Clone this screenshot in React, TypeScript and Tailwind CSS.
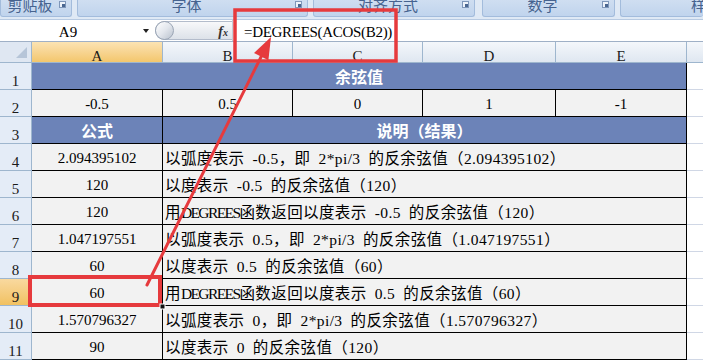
import React from "react";

type Row = { n: number; a: string; desc: React.ReactNode };

const rows: Row[] = [
	{ n: 4, a: "2.094395102", desc: "以弧度表示 -0.5，即 2*pi/3 的反余弦值（2.094395102）" },
	{ n: 5, a: "120", desc: "以度表示 -0.5 的反余弦值（120）" },
	{
		n: 6,
		a: "120",
		desc: (
			<>
				用<span className="tracking-[-1.6px]">DEGREES</span>函数返回以度表示 -0.5 的反余弦值（120）
			</>
		),
	},
	{ n: 7, a: "1.047197551", desc: "以弧度表示 0.5，即 2*pi/3 的反余弦值（1.047197551）" },
	{ n: 8, a: "60", desc: "以度表示 0.5 的反余弦值（60）" },
	{
		n: 9,
		a: "60",
		desc: (
			<>
				用<span className="tracking-[-1.6px]">DEGREES</span>函数返回以度表示 0.5 的反余弦值（60）
			</>
		),
	},
	{ n: 10, a: "1.570796327", desc: "以弧度表示 0，即 2*pi/3 的反余弦值（1.570796327）" },
	{ n: 11, a: "90", desc: "以度表示 0 的反余弦值（120）" },
];

const RibbonGroup = ({ label, className, launcher = true }: { label: string; className: string; launcher?: boolean }) => (
	<div
		className={`relative h-[17px] overflow-hidden rounded-b-[3px] border border-t-0 border-[#a3bcdc] bg-gradient-to-b from-[#cfdef1] to-[#c0d4ed] text-[15px] leading-none text-[#46638f] flex items-end pb-[4px] ${className}`}
	>
		<span>{label}</span>
		{launcher && (
			<span className="absolute right-[5px] top-[1px] w-[7px] h-[7px] border border-[#7f97ba] bg-[#eef3fa]">
				<span className="absolute right-0 bottom-0 w-[3px] h-[3px] bg-[#4a6690]" />
			</span>
		)}
	</div>
);

const RowHead = ({ n, active = false }: { n: number; active?: boolean }) => (
	<div
		className={`flex justify-center items-start pt-[11px] leading-none text-[15px] text-[#1a1a1a] border-r border-b border-[#9eb6ce] ${
			active ? "bg-gradient-to-b from-[#f9d99f] to-[#f1c160]" : "bg-[#e4ecf7]"
		}`}
	>
		{n}
	</div>
);

const Spare = () => <div className="bg-white border-b border-[#d0d7e5]" />;

export default function App() {
	return (
		<div className="relative w-[703px] h-[360px] overflow-hidden bg-white font-['Liberation_Serif','Noto_Sans_CJK_SC',serif] text-black">
			{/* ribbon group labels */}
			<div className="flex h-[20px] bg-[#dfe9f5] border-b border-[#b7cae2] font-['Noto_Sans_CJK_SC',sans-serif]">
				<RibbonGroup label="剪贴板" className="w-[72px] justify-center pr-[12px]" />
				<RibbonGroup label="字体" className="ml-[5px] w-[231px] justify-center pr-[12px]" />
				<RibbonGroup label="对齐方式" className="ml-[5px] w-[162px] justify-center pr-[12px]" />
				<RibbonGroup label="数字" className="ml-[7px] w-[133px] justify-center pr-[12px]" />
				<RibbonGroup label="样" className="ml-[5px] flex-1 pl-[70px] border-r-0" launcher={false} />
			</div>

			{/* formula bar */}
			<div className="flex h-[22px] border-b border-[#9fb0c6] bg-white">
				<div className="w-[136px] flex justify-center items-center pt-[3px] text-[15px] leading-none">A9</div>
				<div className="w-[19px] flex justify-center items-center">
					<span className="w-0 h-0 border-l-[3.5px] border-r-[3.5px] border-t-[4px] border-l-transparent border-r-transparent border-t-[#222]" />
				</div>
				<div className="w-[77px] my-[1px] flex items-center rounded-l-full border border-r-0 border-[#b3bccb] bg-gradient-to-b from-[#f7f8fa] to-[#dde2e9]">
					<span className="ml-[-1px] w-[19px] h-[19px] rounded-full border border-[#9aa5b5] bg-gradient-to-br from-[#ffffff] via-[#e3e7ed] to-[#b9c2ce]" />
					<span className="ml-auto mr-[4px] italic font-bold text-[14px] leading-none text-[#333] pt-[2px]">
						f<span className="text-[10px]">x</span>
					</span>
				</div>
				<div className="flex-1 flex items-center pl-[11px] pt-[3px] text-[15px] tracking-[-0.3px] leading-none border-l border-[#c5cdd8]">
					=DEGREES(ACOS(B2))
				</div>
			</div>

			{/* sheet */}
			<div className="grid grid-cols-[32px_131px_130px_130px_133px_131px_1fr] grid-rows-[21px] auto-rows-[27px] text-[15px] leading-none [word-spacing:0.25em]">
				{/* column headers */}
				<div className="relative bg-[#dfe7f2] border-r border-b border-[#9eb6ce]">
					<svg className="absolute left-[16px] top-[5px]" width="11" height="11" viewBox="0 0 11 11">
						<polygon points="11,0 11,11 0,11" fill="#b6c5d8" />
					</svg>
				</div>
				{["A", "B", "C", "D", "E", ""].map((c, i) => (
					<div
						key={i}
						className={`flex justify-center items-start pt-[7px] text-[15px] leading-none text-[#1a1a1a] border-b border-[#9eb6ce] ${
							i < 5 ? "border-r" : ""
						} ${i === 0 ? "bg-gradient-to-b from-[#fbe3b3] to-[#f3c66c]" : "bg-gradient-to-b from-[#f4f7fb] to-[#dfe7f1]"}`}
					>
						{c}
					</div>
				))}

				{/* row 1 */}
				<RowHead n={1} />
				<div className="col-span-5 flex justify-center items-center bg-[#6c83b8] border-r border-b border-black text-white font-bold text-[16px] font-['Noto_Sans_CJK_SC',sans-serif]">
					余弦值
				</div>
				<Spare />

				{/* row 2 */}
				<RowHead n={2} />
				{["-0.5", "0.5", "0", "1", "-1"].map((v, i) => (
					<div key={i} className="flex justify-center items-center pt-[3px] bg-[#f2f2f2] border-r border-b border-black">
						{v}
					</div>
				))}
				<Spare />

				{/* row 3 */}
				<RowHead n={3} />
				<div className="flex justify-center items-center bg-[#6c83b8] border-r border-b border-black text-white font-bold text-[16px] font-['Noto_Sans_CJK_SC',sans-serif]">
					公式
				</div>
				<div className="col-span-4 flex justify-center items-center bg-[#6c83b8] border-r border-b border-black text-white font-bold text-[16px] font-['Noto_Sans_CJK_SC',sans-serif]">
					说明（结果）
				</div>
				<Spare />

				{rows.map((r) => (
					<React.Fragment key={r.n}>
						<RowHead n={r.n} active={r.n === 9} />
						<div className="flex justify-center items-center pt-[3px] bg-[#f2f2f2] border-r border-b border-black">{r.a}</div>
						<div className="col-span-4 flex items-center pt-[3px] pl-[2px] text-[15.5px] tracking-[0.4px] bg-[#f2f2f2] border-r border-b border-black whitespace-nowrap">
							{r.desc}
						</div>
						<Spare />
					</React.Fragment>
				))}
			</div>

			{/* annotation overlay */}
			<svg className="absolute inset-0 pointer-events-none" width="703" height="360" viewBox="0 0 703 360">
				<rect x="235" y="10" width="161" height="51" fill="none" stroke="#e63a3d" strokeWidth="3.5" />
				<rect x="30" y="277" width="130" height="28" fill="none" stroke="#e63a3d" strokeWidth="4" />
				<line x1="147" y1="285" x2="262" y2="55" stroke="#e63a3d" strokeWidth="3" strokeLinecap="round" />
				<polygon points="271,37 268.4,60.3 254,53.1" fill="#e63a3d" />
				<rect x="160" y="304" width="5" height="5" fill="#111" stroke="#fff" strokeWidth="1" />
			</svg>
		</div>
	);
}
